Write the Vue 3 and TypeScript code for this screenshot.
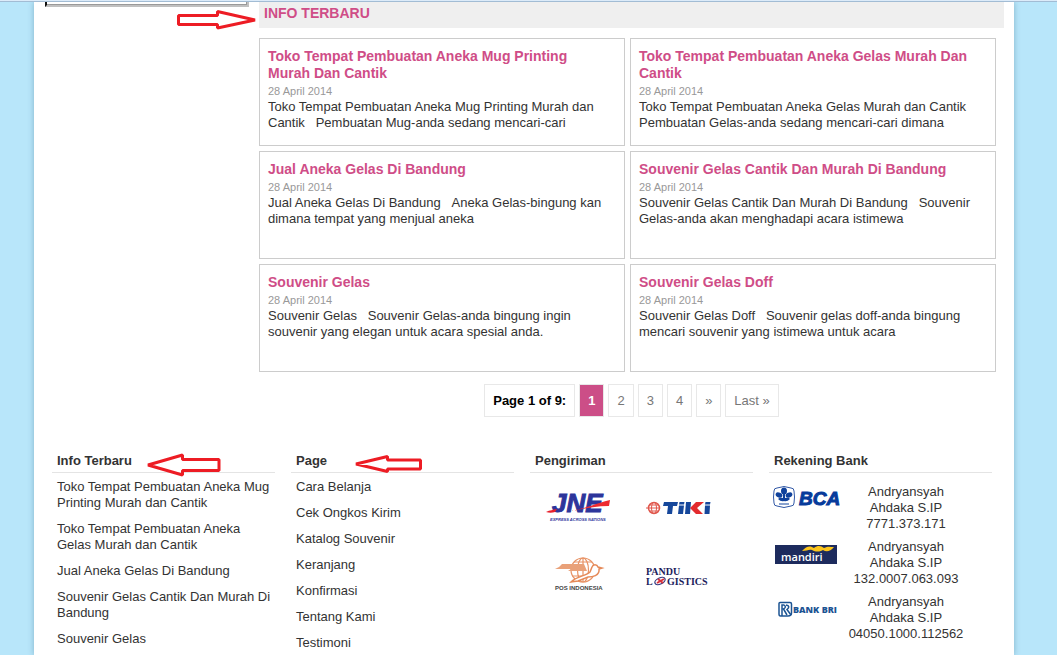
<script setup lang="ts">
interface Post {
  title: string
  date: string
  excerpt: string
}

interface Account {
  bank: 'bca' | 'mandiri' | 'bri'
  number: string
}

const nb = '\u00a0'

const posts: Post[] = [
  {
    title: 'Toko Tempat Pembuatan Aneka Mug Printing Murah Dan Cantik',
    date: '28 April 2014',
    excerpt: `Toko Tempat Pembuatan Aneka Mug Printing Murah dan Cantik${nb} ${nb}Pembuatan Mug-anda sedang mencari-cari`,
  },
  {
    title: 'Toko Tempat Pembuatan Aneka Gelas Murah Dan Cantik',
    date: '28 April 2014',
    excerpt: 'Toko Tempat Pembuatan Aneka Gelas Murah dan Cantik Pembuatan Gelas-anda sedang mencari-cari dimana',
  },
  {
    title: 'Jual Aneka Gelas Di Bandung',
    date: '28 April 2014',
    excerpt: `Jual Aneka Gelas Di Bandung${nb} ${nb}Aneka Gelas-bingung kan dimana tempat yang menjual aneka`,
  },
  {
    title: 'Souvenir Gelas Cantik Dan Murah Di Bandung',
    date: '28 April 2014',
    excerpt: `Souvenir Gelas Cantik Dan Murah Di Bandung${nb} ${nb}Souvenir Gelas-anda akan menghadapi acara istimewa`,
  },
  {
    title: 'Souvenir Gelas',
    date: '28 April 2014',
    excerpt: `Souvenir Gelas${nb} ${nb}Souvenir Gelas-anda bingung ingin souvenir yang elegan untuk acara spesial anda.`,
  },
  {
    title: 'Souvenir Gelas Doff',
    date: '28 April 2014',
    excerpt: `Souvenir Gelas Doff${nb} ${nb}Souvenir gelas doff-anda bingung mencari souvenir yang istimewa untuk acara`,
  },
]

const pages: string[] = ['2', '3', '4', '»', 'Last »']

const latest: string[] = [
  'Toko Tempat Pembuatan Aneka Mug Printing Murah dan Cantik',
  'Toko Tempat Pembuatan Aneka Gelas Murah dan Cantik',
  'Jual Aneka Gelas Di Bandung',
  'Souvenir Gelas Cantik Dan Murah Di Bandung',
  'Souvenir Gelas',
]

const menu: string[] = [
  'Cara Belanja',
  'Cek Ongkos Kirim',
  'Katalog Souvenir',
  'Keranjang',
  'Konfirmasi',
  'Tentang Kami',
  'Testimoni',
]

const accounts: Account[] = [
  { bank: 'bca', number: '7771.373.171' },
  { bank: 'mandiri', number: '132.0007.063.093' },
  { bank: 'bri', number: '04050.1000.112562' },
]
</script>

<template>
  <div class="top-edge"></div>
  <div class="page">
    <div class="body">
      <aside class="sidebar">
        <div class="widget"></div>
      </aside>

      <main class="main">
        <div class="heading">
          <h1>INFO TERBARU</h1>
          <svg class="arrow arrow-heading" width="80" height="22" viewBox="0 0 80 22" aria-hidden="true">
            <path d="M1.500 6.500H40.500V2.500L78 11L40.500 19V15.500H1.500Z" />
          </svg>
        </div>

        <div class="posts">
          <article v-for="post in posts" :key="post.title" class="post">
            <h2><a href="#">{{ post.title }}</a></h2>
            <time>{{ post.date }}</time>
            <p>{{ post.excerpt }}</p>
          </article>
        </div>

        <nav class="pager" aria-label="Halaman">
          <span class="summary">Page 1 of 9:</span>
          <span class="current" aria-current="page">1</span>
          <a v-for="label in pages" :key="label" href="#">{{ label }}</a>
        </nav>
      </main>
    </div>

    <footer class="footer">
      <section>
        <h3>
          Info Terbaru
          <svg class="arrow arrow-latest" width="75" height="26" viewBox="0 0 75 26" aria-hidden="true">
            <path d="M2 12L36.500 2V6.500H73V17.500H36.500V22Z" />
          </svg>
        </h3>
        <ul>
          <li v-for="item in latest" :key="item"><a href="#">{{ item }}</a></li>
        </ul>
      </section>

      <section>
        <h3>
          Page
          <svg class="arrow arrow-menu" width="70" height="20" viewBox="0 0 70 20" aria-hidden="true">
            <path d="M1 10L32.500 2.500V6H65.500V15H32.500V17.500Z" />
          </svg>
        </h3>
        <ul>
          <li v-for="item in menu" :key="item"><a href="#">{{ item }}</a></li>
        </ul>
      </section>

      <section>
        <h3>Pengiriman</h3>
        <div class="couriers">
          <svg width="68" height="38" viewBox="0 0 68 38" role="img" aria-label="JNE">
            <text x="6" y="24" class="jne">JNE</text>
            <path d="M0 24C4 22 7 22 11 21L9 24C6 25 3 25 0 24Z" fill="#e8202c" />
            <path d="M24 23C38 21 48 16 64 12L63 18C50 18 38 21 24 23Z" fill="#ee2a30" />
            <text x="4" y="33" class="jne-tag">EXPRESS ACROSS NATIONS</text>
          </svg>
          <svg width="68" height="22" viewBox="0 0 68 22" role="img" aria-label="TIKI">
            <g fill="none" stroke="#e0574c">
              <circle cx="8" cy="12" r="5.500" stroke-width="1.500" />
              <ellipse cx="8" cy="12" rx="2.500" ry="5.500" />
              <path d="M0 12H14M3.500 9H12.500M3.500 15H12.500" />
            </g>
            <g fill="#16479b">
              <path d="M18 6H32L31 10H27L26 18H21L22 10H17Z" />
              <path d="M33 9.500H38L37 18H32ZM33.500 6H38.500L38 8.500H33Z" />
              <path d="M40 6H45L44 18H39Z" />
              <path d="M59 9.500H64L63.500 18H58.500ZM59.500 6H64.500L64 8.500H59Z" />
            </g>
            <path d="M50 6H58L51 12L57 18H50L44 12Z" fill="#e32b2e" />
          </svg>
          <svg width="52" height="38" viewBox="0 0 52 38" role="img" aria-label="POS INDONESIA">
            <g fill="none" stroke="#e89264" stroke-width="1.200">
              <circle cx="29" cy="14" r="12" />
              <ellipse cx="29" cy="14" rx="5.500" ry="12" />
              <path d="M29 2V26M20 6H38M18 20H39" />
            </g>
            <path d="M8 8H30L33 15H14L17 13H1L5 11Z" fill="#e9a179" />
            <path d="M17 26C23 20 32 20 36 16L38 11C39 8 43 8 44 11L48 12L45 13C46 20 38 21 34 21L24 25Z" fill="#fff" stroke="#e58a59" stroke-width="1.500" />
            <text x="1" y="34" class="pos">POS INDONESIA</text>
          </svg>
          <svg width="68" height="24" viewBox="0 0 68 24" role="img" aria-label="PANDU LOGISTICS">
            <text x="0" y="12" class="pandu">PANDU</text>
            <text x="0" y="22" class="pandu">L</text>
            <text x="21" y="22" class="pandu">GISTICS</text>
            <g fill="none" stroke-width="1.300">
              <ellipse cx="14" cy="18" rx="5.500" ry="3" stroke="#3a3b80" transform="rotate(-25 14 18)" />
              <path d="M11 20L18 16M12 16L17 20" stroke="#d8313a" stroke-width="2" />
            </g>
          </svg>
        </div>
      </section>

      <section>
        <h3>Rekening Bank</h3>
        <table class="banks">
          <tbody>
            <tr v-for="account in accounts" :key="account.bank">
              <td class="bank-logo">
                <svg v-if="account.bank === 'bca'" width="72" height="32" viewBox="0 0 72 32" role="img" aria-label="BCA">
                  <path d="M4 5Q11 2 18 5Q21 5 21 8Q22 14 21 20Q21 23 18 23Q11 26 4 23Q1 23 1 20Q0 14 1 8Q1 5 4 5Z" fill="#fff" stroke="#3158a6" />
                  <g fill="#10429c">
                    <ellipse cx="11" cy="8" rx="3" ry="3.500" />
                    <ellipse cx="6" cy="12" rx="3.500" ry="2.500" transform="rotate(25 6 12)" />
                    <ellipse cx="16" cy="12" rx="3.500" ry="2.500" transform="rotate(-25 16 12)" />
                    <path d="M10 11H12L12 15Q16 14 17 16Q14 19 11 18Q8 19 5 16Q7 14 10 15Z" />
                    <path d="M6 20.500H16V21.500H6Z" />
                  </g>
                  <text x="26" y="22" class="bca">BCA</text>
                </svg>
                <svg v-else-if="account.bank === 'mandiri'" width="72" height="32" viewBox="0 0 72 32" role="img" aria-label="mandiri">
                  <rect x="2" y="7" width="62" height="19" fill="#1d2b5d" />
                  <text x="8" y="23" class="mandiri">mandiri</text>
                  <path d="M29 13C34 7 38 8 41 10C45 7 48 8 51 10C55 8 57 9 61 9C57 14 53 14 50 12C46 14 43 14 39 12C36 11 34 13 29 13Z" fill="#fcc51c" />
                </svg>
                <svg v-else width="72" height="32" viewBox="0 0 72 32" role="img" aria-label="BANK BRI">
                  <path d="M7 9.500H17Q18.500 9.500 18.500 11V20Q18.500 23 15 23H7.500Q6 23 6 21V10.500Q6 9.500 7 9.500Z" fill="#fff" stroke="#1c5493" stroke-width="1.500" />
                  <path d="M9 23V12H11Q14 14 10.500 16L14 22M13 12Q18 13 14 16.500L18 22" fill="none" stroke="#1c5493" stroke-width="1.500" />
                  <text x="20" y="20" class="bri">BANK BRI</text>
                </svg>
              </td>
              <td class="bank-info">Andryansyah<br />Ahdaka S.IP<br />{{ account.number }}</td>
            </tr>
          </tbody>
        </table>
      </section>
    </footer>
  </div>
</template>

<style>
body {
  margin: 0;
  background: #b8e6fa;
}
</style>

<style scoped>
.top-edge {
  height: 1px;
  background: #dcebf9;
  border-bottom: 1px solid #a2bcd4;
  position: relative;
  z-index: 1;
}

.page {
  box-sizing: border-box;
  min-height: calc(100vh - 2px);
  margin: 0 43px 0 34px;
  background: #fff;
  box-shadow: 0 0 6px rgba(0, 60, 90, 0.3);
  color: #333;
  font: 13px/16px "Liberation Sans", Arial, sans-serif;
}

a {
  color: inherit;
  text-decoration: none;
}

h1,
h2,
h3,
p,
ul {
  margin: 0;
  padding: 0;
}

.body {
  display: grid;
  grid-template-columns: 204px 1fr;
  gap: 10px;
  padding: 0 10px 0 11px;
}

.widget {
  box-sizing: border-box;
  height: 5px;
  border: 2px solid #c0c0c0;
  border-top: 0;
  border-left-color: #111;
  box-shadow: inset -1px -1px #999;
}

.heading {
  position: relative;
  height: 26px;
  padding-left: 5px;
  background: #efefef;
}

.heading h1 {
  color: #cf4d87;
  font-size: 14px;
  line-height: 22px;
}

.arrow {
  position: absolute;
  fill: none;
  stroke: #ed1c24;
  stroke-width: 3;
  stroke-linejoin: bevel;
}

.arrow-heading {
  left: -82px;
  top: 7px;
}

.posts {
  display: grid;
  grid-template-columns: 1fr 1fr;
  gap: 5px;
  padding: 10px 8px 0 0;
}

.post {
  box-sizing: border-box;
  min-height: 108px;
  padding: 9px 8px;
  border: 1px solid #ccc;
}

.post h2 {
  padding-right: 12px;
  color: #cf4d87;
  font-size: 14px;
  line-height: 17px;
}

.post time {
  display: block;
  padding-top: 1px;
  color: #999;
  font-size: 11px;
}

.pager {
  display: flex;
  justify-content: center;
  gap: 4px;
  padding-top: 12px;
  color: #777;
  line-height: 31px;
}

.pager > * {
  padding: 0 8px;
  border: 1px solid #e8e8e8;
}

.pager .summary {
  color: #000;
  font-weight: bold;
}

.pager .current {
  background: #cc4e87;
  color: #fff;
  font-weight: bold;
}

.footer {
  display: grid;
  grid-template-columns: repeat(4, 1fr);
  gap: 16px;
  padding: 36px 22px 0 18px;
}

.footer h3 {
  position: relative;
  padding: 0 5px 3px;
  border-bottom: 1px solid #e4e4e4;
  font-size: 13px;
}

.arrow-latest {
  left: 94px;
  top: 0;
}

.arrow-menu {
  left: 64px;
  top: 1px;
}

.footer ul {
  padding: 6px 4px 0 5px;
  list-style: none;
}

.footer li + li {
  margin-top: 10px;
}

.couriers {
  display: grid;
  grid-template-columns: 100px 100px;
  grid-auto-rows: 68px;
  place-items: center;
}

.banks {
  border-spacing: 0;
  margin-top: 10px;
}

.banks td {
  padding: 0;
  vertical-align: top;
}

.banks .bank-logo {
  width: 72px;
  padding-left: 4px;
}

.bank-logo svg {
  display: block;
}

.banks .bank-info {
  width: 122px;
  padding: 1px 0 6px;
  text-align: center;
}

.jne {
  fill: #2d359b;
  stroke: #2d359b;
  font: italic bold 26px/1 "Liberation Sans", sans-serif;
}

.jne-tag {
  fill: #2d359b;
  font: italic bold 4px/1 "Liberation Sans", sans-serif;
}

.pos {
  fill: #444;
  font: bold 6px "Liberation Sans", sans-serif;
}

.pandu {
  fill: #1b1c5c;
  font: bold 10px "Liberation Serif", serif;
}

.bca {
  fill: #063b9b;
  stroke: #063b9b;
  font: italic bold 19px "Liberation Sans", sans-serif;
}

.mandiri {
  fill: #fff;
  font: 600 11px "Open Sans", sans-serif;
}

.bri {
  fill: #1c5493;
  font: 800 9px "Open Sans", sans-serif;
}
</style>
